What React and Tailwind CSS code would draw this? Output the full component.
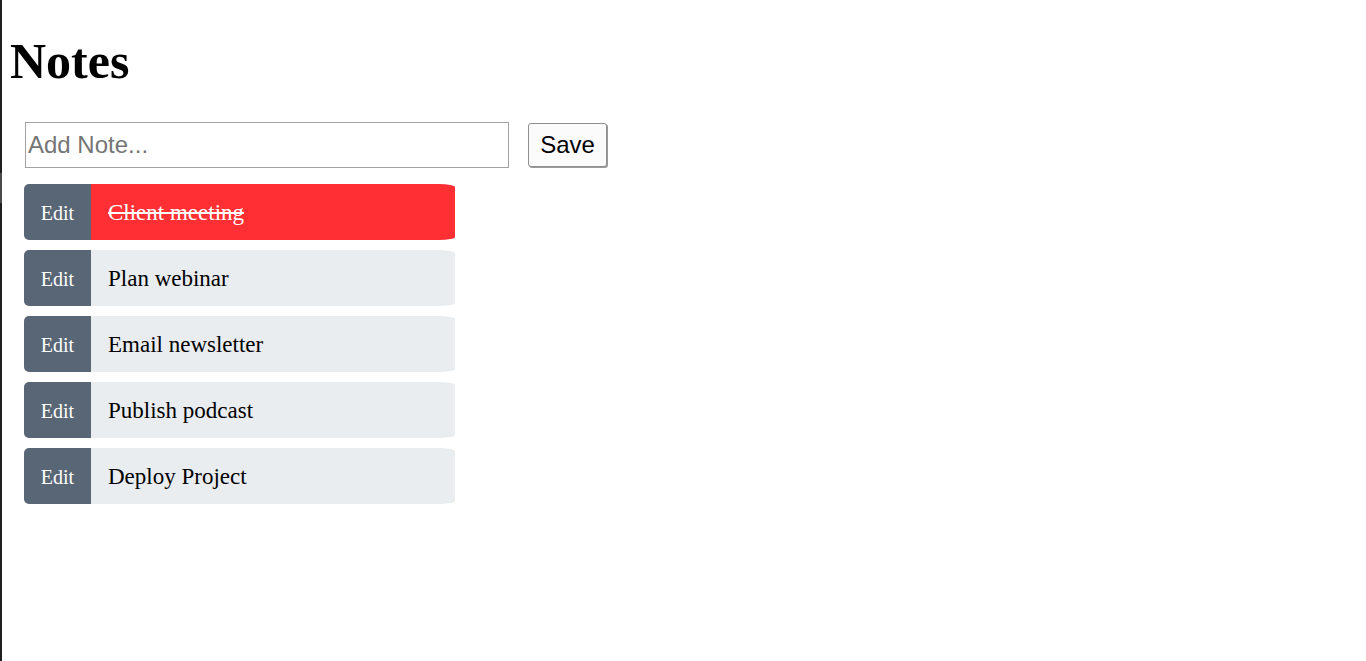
import { useState } from "react";

const initialNotes = [
  { id: 1, text: "Client meeting", done: true },
  { id: 2, text: "Plan webinar", done: false },
  { id: 3, text: "Email newsletter", done: false },
  { id: 4, text: "Publish podcast", done: false },
  { id: 5, text: "Deploy Project", done: false },
];

function NoteRow({ note }) {
  return (
    <li className="flex h-[56px] w-[431px]">
      <button className="flex w-[67px] items-center justify-center rounded-l-[5px] bg-[#586676] pt-[2px] text-[20px] text-white">
        Edit
      </button>
      <div
        className={`flex flex-1 items-center rounded-tr-[16px_3px] rounded-br-[16px_3px] pl-[17px] pt-[2px] text-[23px] ${
          note.done ? "bg-[#ff2f34] text-white line-through" : "bg-[#e9edf0] text-black"
        }`}
      >
        {note.text}
      </div>
    </li>
  );
}

export default function App() {
  const [notes] = useState(initialNotes);
  const [value, setValue] = useState("");

  return (
    <div className="flex min-h-[661px] bg-white font-['Liberation_Serif',serif]">
      {/* left edge strip */}
      <div className="flex w-[2px] flex-col bg-[#1f1f1f]">
        <div className="h-[173px]" />
        <div className="h-[30px] bg-[#4a4a4a]" />
      </div>

      <div className="flex-1 pl-[8px]">
        <h1 className="mt-[37px] text-[50px] font-bold leading-[48px]">Notes</h1>

        <div className="mt-[37px] ml-[15px] flex items-center gap-[19px]">
          <input
            value={value}
            onChange={(e) => setValue(e.target.value)}
            placeholder="Add Note..."
            className="h-[46px] w-[484px] border border-[#a3a3a3] px-[2px] font-['Liberation_Sans',sans-serif] text-[24px] placeholder:text-[#757575] outline-none"
          />
          <button className="h-[44px] w-[79px] rounded-[3px] border border-[#8f8f8f] bg-[#fbfbfb] font-['Liberation_Sans',sans-serif] text-[24px] text-black shadow-[1px_1px_0_#9a9a9a]">
            Save
          </button>
        </div>

        <ul className="mt-[16px] ml-[14px] flex flex-col gap-[10px]">
          {notes.map((n) => (
            <NoteRow key={n.id} note={n} />
          ))}
        </ul>
      </div>
    </div>
  );
}
